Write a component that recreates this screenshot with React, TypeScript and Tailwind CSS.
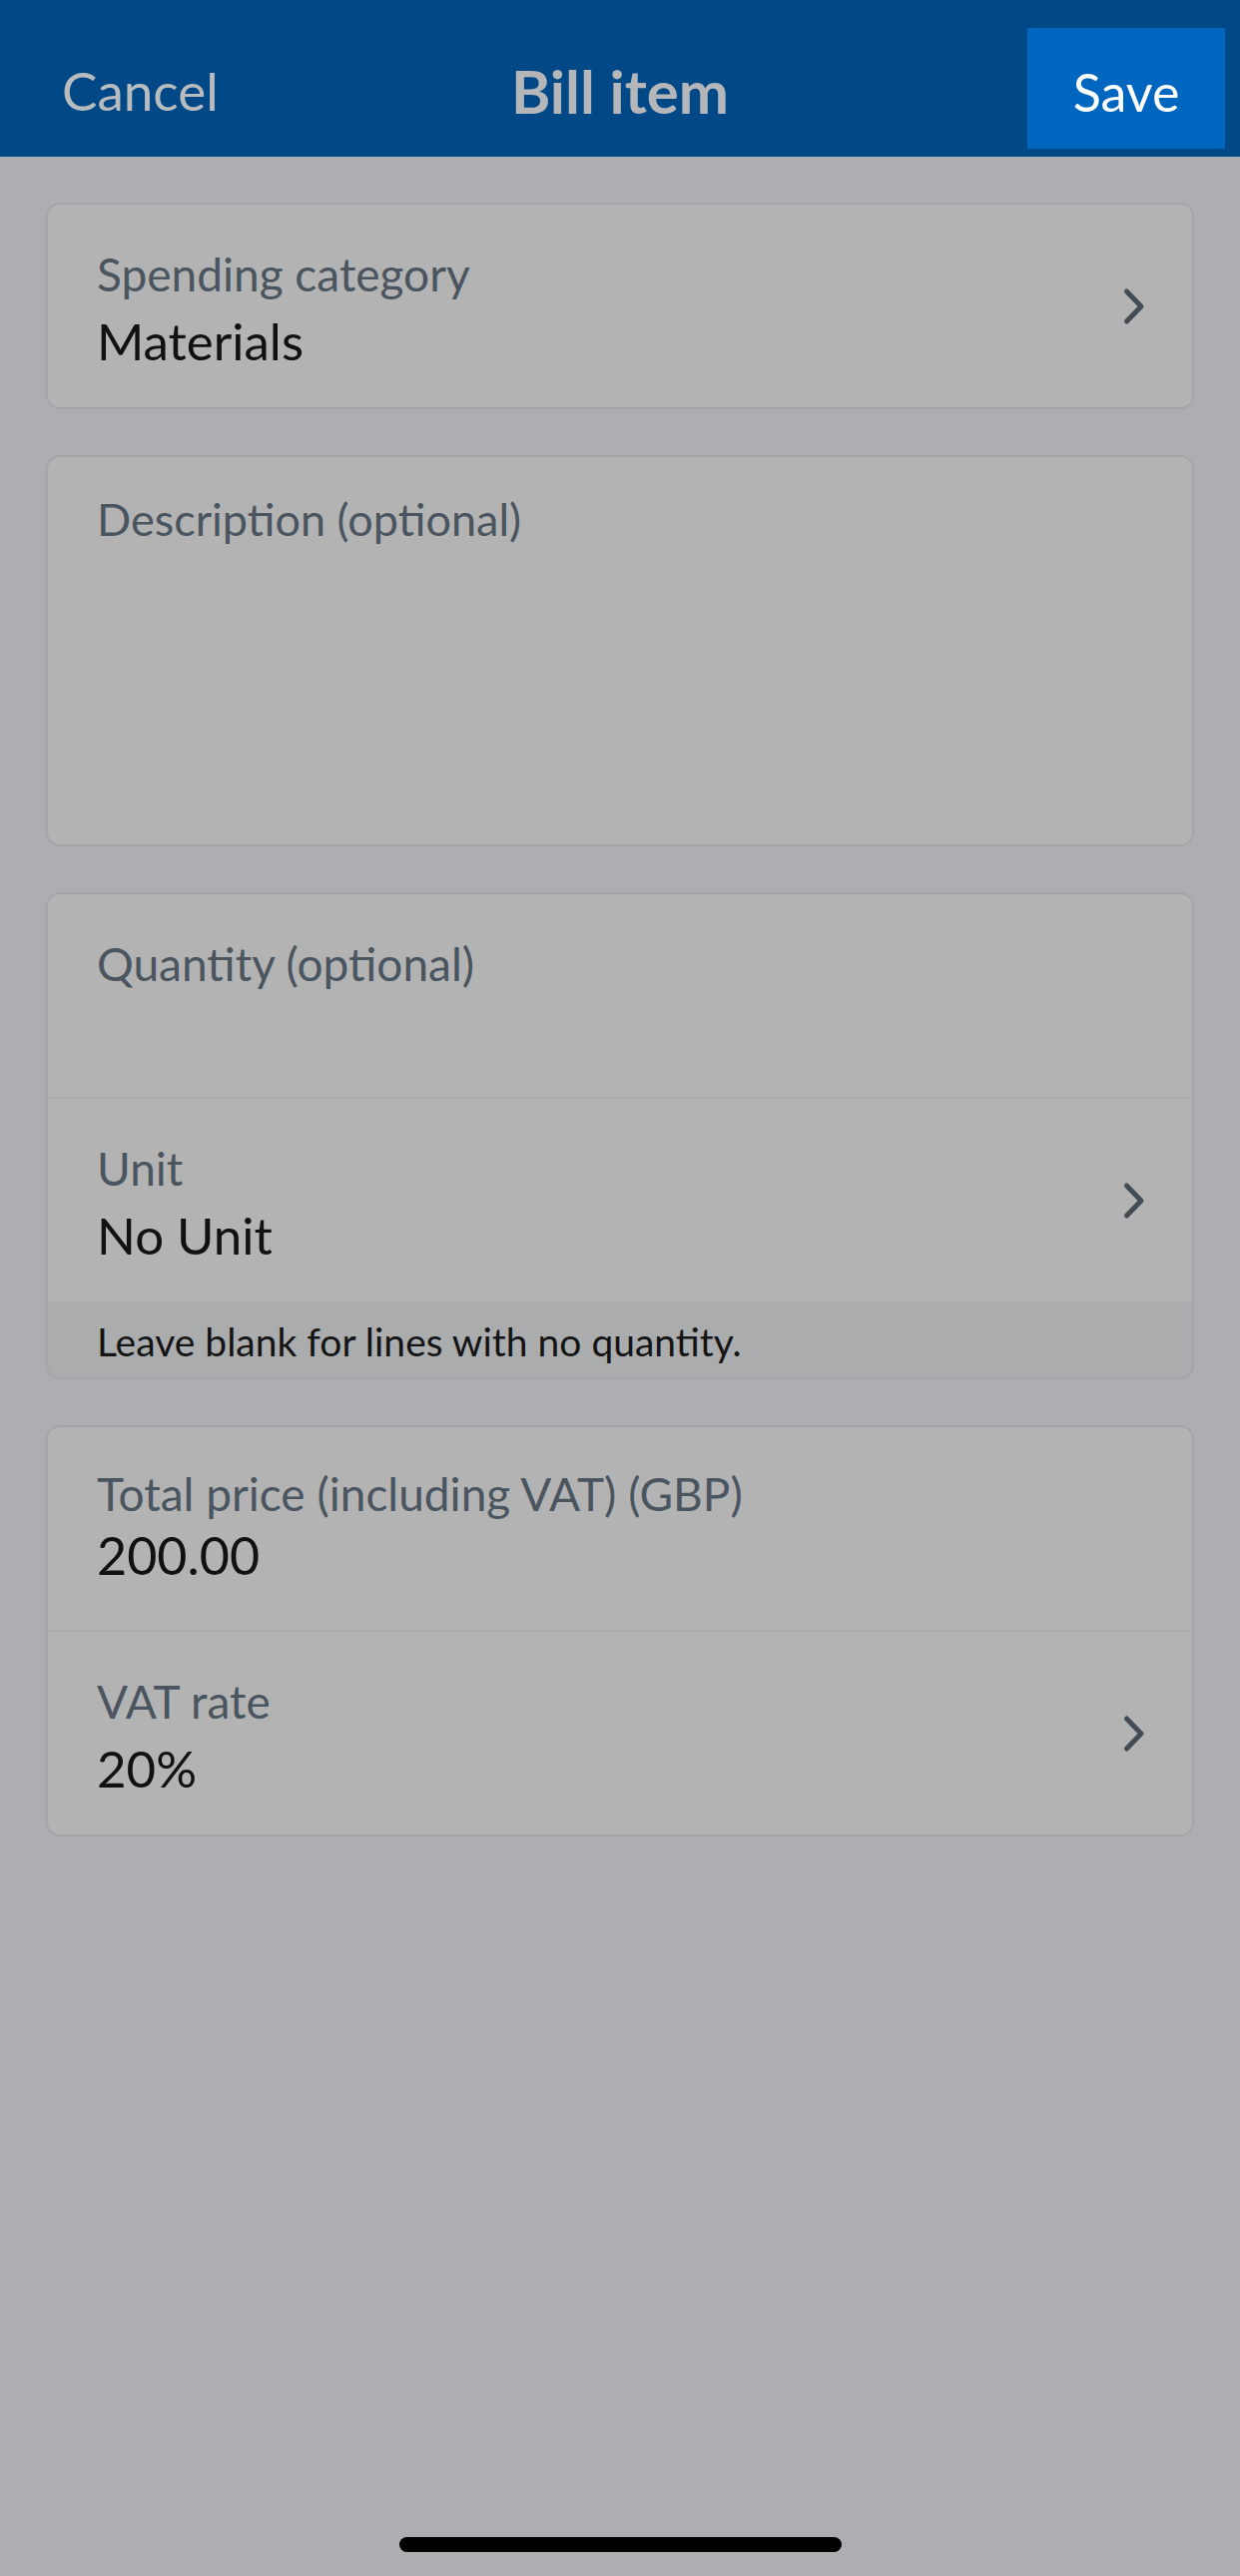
import React from 'react';

const font = { fontFamily: 'Lato, "Noto Sans", sans-serif' };

const Chevron: React.FC = () => (
  <svg width="24" height="38" viewBox="0 0 24 38" fill="none" className="shrink-0">
    <path d="M4.5 4 L19 19 L4.5 34" stroke="#434c55" strokeWidth="5" strokeLinecap="round" strokeLinejoin="round" />
  </svg>
);

interface RowProps {
  label: string;
  value?: string;
  chevron?: boolean;
  divider?: boolean;
}

const Row: React.FC<RowProps> = ({ label, value, chevron, divider }) => (
  <div
    className={`flex items-center pl-[49px] pr-[46px] ${divider ? 'h-[205px] border-b-2 border-[#a9abae]' : 'h-[203px]'}`}
  >
    <div className="flex-1 self-start pt-[44px]">
      <div className="text-[46px] leading-[52px] text-[#4a5560]">{label}</div>
      {value && <div className="mt-[11px] text-[51px] leading-[60px] text-[#111111]">{value}</div>}
    </div>
    {chevron && <Chevron />}
  </div>
);

const Card: React.FC<{ children: React.ReactNode }> = ({ children }) => (
  <div className="overflow-hidden rounded-[14px] border-2 border-[#a3a5a8] bg-[#b3b3b3]">{children}</div>
);

export default function App() {
  return (
    <div className="flex h-[2581px] flex-col bg-[#adaeb2]" style={font}>
      <header className="grid h-[157px] grid-cols-[1fr_auto_1fr] items-center bg-[#004886] pb-[8px] pt-[28px]">
        <div className="pl-[62px] pt-[4px] text-[53px] text-[#b9bcbf]">Cancel</div>
        <div className="pt-[4px] text-[60px] font-bold text-[#b4b6b9]">Bill item</div>
        <div className="flex justify-end pr-[15px]">
          <button className="flex h-[121px] w-[198px] items-center justify-center bg-[#0066bf] pt-[6px] text-[52px] text-white">
            Save
          </button>
        </div>
      </header>

      <main className="flex flex-col gap-[46px] px-[46px] pt-[46px]">
        <Card>
          <Row label="Spending category" value="Materials" chevron />
        </Card>

        <Card>
          <div className="h-[388px] pl-[49px] pt-[36px]">
            <div className="text-[45px] leading-[52px] text-[#4a5560]">Description (optional)</div>
          </div>
        </Card>

        <Card>
          <Row label="Quantity (optional)" divider />
          <Row label="Unit" value="No Unit" chevron />
          <div className="h-[76px] bg-[#abacae] pl-[49px] pt-[17px] text-[39px] leading-[46px] text-[#141414]">
            Leave blank for lines with no quantity.
          </div>
        </Card>

        <Card>
          <div className="h-[205px] border-b-2 border-[#a9abae] pl-[49px] pt-[41px]">
            <div className="text-[46px] leading-[52px] text-[#4a5560]">Total price (including VAT) (GBP)</div>
            <div className="mt-[5px] text-[52px] leading-[60px] text-[#111111]">200.00</div>
          </div>
          <Row label="VAT rate" value="20%" chevron />
        </Card>
      </main>

      <div className="flex-1" />
      <div className="mb-[24px] flex justify-center">
        <div className="h-[15px] w-[443px] rounded-full bg-black" />
      </div>
    </div>
  );
}
